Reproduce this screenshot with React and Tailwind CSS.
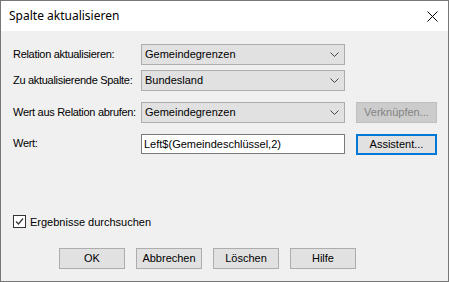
import { useState } from 'react'

const font = { fontFamily: '"Liberation Sans", Arial, sans-serif' }

function Chevron() {
  return (
    <svg width="9" height="5" viewBox="0 0 9 5" className="shrink-0">
      <polyline points="0.5,0.5 4.5,4.5 8.5,0.5" fill="none" stroke="#444" strokeWidth="1" />
    </svg>
  )
}

function Combo({ value }) {
  return (
    <div className="flex h-[21px] w-[204px] shrink-0 items-center justify-between border border-[#adadad] bg-[#e1e1e1] pl-[3px] pr-[5px] text-[11px] text-black">
      <span>{value}</span>
      <Chevron />
    </div>
  )
}

function Button({ children, disabled, focused, className = '' }) {
  return (
    <button
      className={`flex h-[21px] shrink-0 items-center justify-center text-[11px] ${
        disabled
          ? 'border border-[#bfbfbf] bg-[#cccccc] text-[#838383]'
          : focused
          ? 'border-2 border-[#0078d7] bg-[#e1e1e1] text-black'
          : 'border border-[#adadad] bg-[#e1e1e1] text-black'
      } ${className}`}
    >
      {children}
    </button>
  )
}

function Label({ children, className = '' }) {
  return (
    <span className={`w-[128px] shrink-0 whitespace-nowrap tracking-[-0.3px] ${className}`}>{children}</span>
  )
}

export default function App() {
  const [checked, setChecked] = useState(true)

  return (
    <div style={font} className="flex h-[282px] w-[449px] flex-col border border-[#777] bg-[#f0f0f0] text-[11px] text-black">
      {/* Title bar */}
      <div className="flex h-[30px] shrink-0 items-center justify-between bg-white pl-[8px] pr-[10px]">
        <span style={{ fontFamily: '"Noto Sans", "Liberation Sans", sans-serif' }} className="text-[12px]">
          Spalte aktualisieren
        </span>
        <svg width="11" height="11" viewBox="0 0 11 11">
          <path d="M0.5 0.5 L10.5 10.5 M10.5 0.5 L0.5 10.5" stroke="#000" strokeWidth="1" />
        </svg>
      </div>

      {/* Body */}
      <div className="flex flex-1 flex-col px-[12px] pt-[13px] pb-[12px]">
        <div className="flex items-center">
          <Label>Relation aktualisieren:</Label>
          <Combo value="Gemeindegrenzen" />
        </div>
        <div className="mt-[5px] flex items-center">
          <Label>Zu aktualisierende Spalte:</Label>
          <Combo value="Bundesland" />
        </div>
        <div className="mt-[11px] flex items-center">
          <Label>Wert aus Relation abrufen:</Label>
          <Combo value="Gemeindegrenzen" />
          <Button disabled className="ml-[11px] w-[81px]">Verknüpfen...</Button>
        </div>
        <div className="mt-[11px] flex items-start">
          <Label className="pt-[1px]">Wert:</Label>
          <div className="flex h-[20px] w-[204px] shrink-0 items-center border border-[#7a7a7a] bg-white pl-[2px]">
            Left$(Gemeindeschlüssel,2)
          </div>
          <Button focused className="ml-[11px] w-[81px]">Assistent...</Button>
        </div>

        <div className="flex-1" />

        <label className="flex items-center gap-[4px]" onClick={() => setChecked(!checked)}>
          <span className="flex h-[13px] w-[13px] items-center justify-center border border-[#333] bg-white">
            {checked && (
              <svg width="9" height="9" viewBox="0 0 9 9">
                <polyline points="1,4.5 3.5,7 8,1.5" fill="none" stroke="#333" strokeWidth="1.2" />
              </svg>
            )}
          </span>
          <span>Ergebnisse durchsuchen</span>
        </label>

        <div className="mt-[18px] flex gap-[11px] pl-[46px]">
          <Button className="w-[66px]">OK</Button>
          <Button className="w-[66px]">Abbrechen</Button>
          <Button className="w-[66px]">Löschen</Button>
          <Button className="w-[66px]">Hilfe</Button>
        </div>
      </div>
    </div>
  )
}
